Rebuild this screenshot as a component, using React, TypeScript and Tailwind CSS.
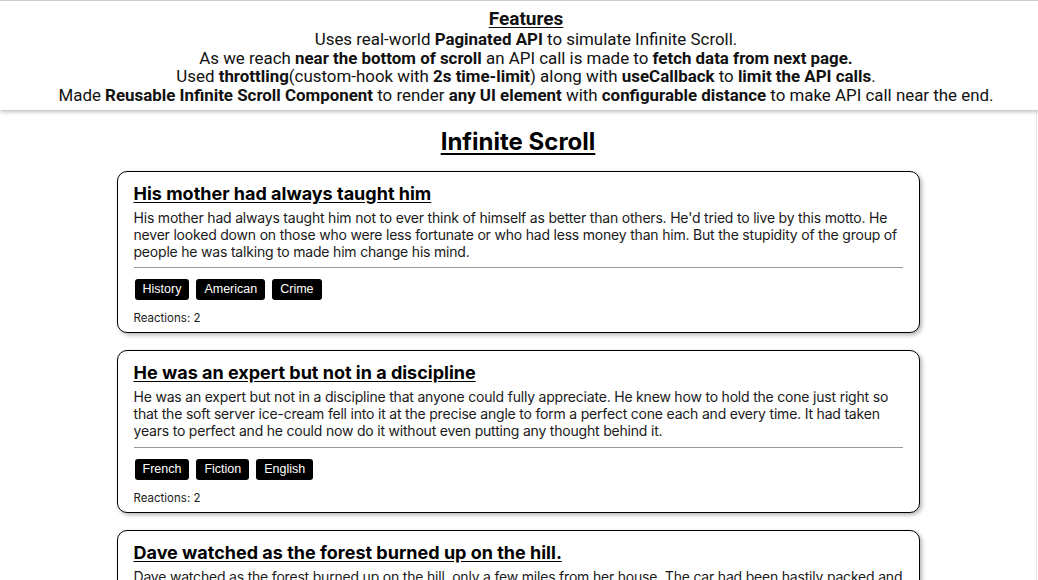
import React from "react";

type Post = {
  id: number;
  title: string;
  body: string;
  tags: string[];
  reactions: number;
};

const POSTS: Post[] = [
  {
    id: 1,
    title: "His mother had always taught him",
    body: "His mother had always taught him not to ever think of himself as better than others. He'd tried to live by this motto. He never looked down on those who were less fortunate or who had less money than him. But the stupidity of the group of people he was talking to made him change his mind.",
    tags: ["History", "American", "Crime"],
    reactions: 2,
  },
  {
    id: 2,
    title: "He was an expert but not in a discipline",
    body: "He was an expert but not in a discipline that anyone could fully appreciate. He knew how to hold the cone just right so that the soft server ice-cream fell into it at the precise angle to form a perfect cone each and every time. It had taken years to perfect and he could now do it without even putting any thought behind it.",
    tags: ["French", "Fiction", "English"],
    reactions: 2,
  },
  {
    id: 3,
    title: "Dave watched as the forest burned up on the hill.",
    body: "Dave watched as the forest burned up on the hill, only a few miles from her house. The car had been hastily packed and Marta was inside trying to round up the last of the pets. Dave went through his mental list of the most important papers and documents that they couldn't leave behind.",
    tags: ["Magical", "History", "French"],
    reactions: 5,
  },
];

function PostCard({ post }: { post: Post }) {
  return (
    <article className="w-[803px] rounded-[10px] border border-black bg-white px-4 pt-[10px] pb-[7px] shadow-[2px_2px_4px_rgba(0,0,0,0.3)]">
      <h2 className="text-[18px] leading-6 font-bold text-black underline underline-offset-2">{post.title}</h2>
      <p className="mt-[4px] text-[14px] leading-[16.8px] tracking-[-0.2px] text-[#1a1a1a]">{post.body}</p>
      <hr className="mt-[7px] border-t border-[#999]" />
      <div className="mt-[11px] flex gap-[7px] pl-px">
        {post.tags.map((t) => (
          <span
            key={t}
            className="rounded-[3px] bg-black px-2 text-[12.5px] leading-[21px] text-white [font-family:'Liberation_Sans',Arial,sans-serif]"
          >
            {t}
          </span>
        ))}
      </div>
      <p className="mt-[11px] text-[11.5px] leading-[14px] text-[#1a1a1a]">Reactions: {post.reactions}</p>
    </article>
  );
}

export default function App() {
  return (
    <div className="h-[580px] overflow-hidden bg-white text-black [font-family:Inter,'Noto_Sans',sans-serif]">
      <header className="relative z-10 border-t border-[#ccc] pt-[7px] pb-[6px] pl-[14px] text-center text-[16.9px] leading-[18.5px] text-[#111] shadow-[0_2px_4px_rgba(0,0,0,0.25)] [font-family:Roboto,'Noto_Sans',sans-serif]">
        <h3 className="text-[19px] leading-[22px] font-bold underline underline-offset-2">Features</h3>
        <p>
          Uses real-world <b>Paginated API</b> to simulate Infinite Scroll.
        </p>
        <p>
          As we reach <b>near the bottom of scroll</b> an API call is made to <b>fetch data from next page.</b>
        </p>
        <p>
          Used <b>throttling</b>(custom-hook with <b>2s time-limit</b>) along with <b>useCallback</b> to{" "}
          <b>limit the API calls</b>.
        </p>
        <p>
          Made <b>Reusable Infinite Scroll Component</b> to render <b>any UI element</b> with{" "}
          <b>configurable distance</b> to make API call near the end.
        </p>
      </header>

      <main className="mr-[1px] h-full border-r border-[#e5e5e5]">
        <h1 className="pt-[16px] text-center text-[24px] leading-8 font-bold underline underline-offset-[3px]">
          Infinite Scroll
        </h1>
        <div className="mt-[13px] flex flex-col items-center gap-[17px]">
          {POSTS.map((p) => (
            <PostCard key={p.id} post={p} />
          ))}
        </div>
      </main>
    </div>
  );
}
